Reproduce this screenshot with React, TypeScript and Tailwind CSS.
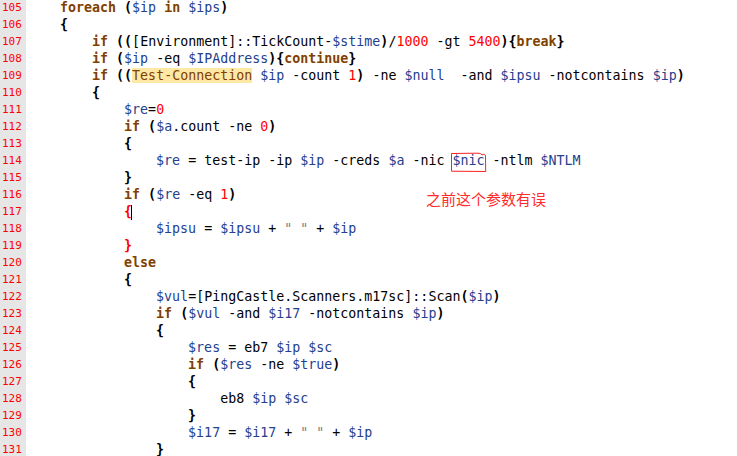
import React from 'react';

const code: string[] = [
  '    foreach ($ip in $ips)',
  '    {',
  '        if (([Environment]::TickCount-$stime)/1000 -gt 5400){break}',
  '        if ($ip -eq $IPAddress){continue}',
  '        if ((Test-Connection $ip -count 1) -ne $null  -and $ipsu -notcontains $ip)',
  '        {',
  '            $re=0',
  '            if ($a.count -ne 0)',
  '            {',
  '                $re = test-ip -ip $ip -creds $a -nic $nic -ntlm $NTLM',
  '            }',
  '            if ($re -eq 1)',
  '            {',
  '                $ipsu = $ipsu + " " + $ip',
  '            }',
  '            else',
  '            {',
  '                $vul=[PingCastle.Scanners.m17sc]::Scan($ip)',
  '                if ($vul -and $i17 -notcontains $ip)',
  '                {',
  '                    $res = eb7 $ip $sc',
  '                    if ($res -ne $true)',
  '                    {',
  '                        eb8 $ip $sc',
  '                    }',
  '                    $i17 = $i17 + " " + $ip',
  '                }',
];

const keywords = ['foreach', 'in', 'if', 'else', 'continue', 'break'];

type Kind = 'var' | 'str' | 'op' | 'num' | 'kw' | 'cmd' | 'brace' | 'text';

const styles: Record<Kind, string> = {
  var: 'text-[#24408e]',
  str: 'text-[#808080]',
  op: 'text-black',
  num: 'text-[#ff0000]',
  kw: 'text-[#804000] font-bold',
  cmd: 'text-[#804000] bg-[#fde8a4]',
  brace: 'text-black font-bold',
  text: 'text-black',
};

const tokenRe = /(\$\w+)|("[^"]*")|(-[A-Za-z]+)|(\d+)|([A-Za-z_]\w*(?:-[A-Za-z]\w*)*)|([(){}])|(\s+)|(.)/g;

function tokenize(line: string): { t: string; k: Kind }[] {
  const out: { t: string; k: Kind }[] = [];
  for (const m of line.matchAll(tokenRe)) {
    let k: Kind = 'text';
    if (m[1]) k = 'var';
    else if (m[2]) k = 'str';
    else if (m[3]) k = 'op';
    else if (m[4]) k = 'num';
    else if (m[5]) k = keywords.includes(m[5]) ? 'kw' : m[5] === 'Test-Connection' ? 'cmd' : 'text';
    else if (m[6]) k = 'brace';
    out.push({ t: m[0], k });
  }
  return out;
}

const CodeLine = ({ text, index }: { text: string; index: number }) => {
  let nicCount = 0;
  return (
    <div className="flex h-[17px]">
      <div className="w-[26px] shrink-0 bg-[#e6e6e6] pl-[2px] text-[11px] leading-[17px] text-[#ff0000]">
        {105 + index}
      </div>
      <div className="pl-[2px] whitespace-pre">
        {tokenize(text).map((tok, i) => {
          // matched brace pair at 117 / 119
          if (tok.k === 'brace' && (index === 12 || index === 14)) {
            return (
              <span key={i} className="font-bold text-[#ff0000]">
                {tok.t}
                {index === 12 && <span className="inline-block w-px h-[15px] bg-black align-middle -ml-px" />}
              </span>
            );
          }
          if (index === 9 && tok.t === '$nic' && ++nicCount === 1) {
            return (
              <span key={i} className={`relative ${styles[tok.k]}`}>
                {tok.t}
                <svg className="absolute left-[-2px] top-[-1px]" width="40" height="21" viewBox="0 0 40 21" fill="none">
                  <path
                    d="M1.5 1.5 L27 1.2 Q31 0.8 32 3 Q34 1 35.5 3.5 L35.7 19.5 L1.5 19.2 Z"
                    stroke="#ff2020"
                    strokeWidth="1"
                  />
                </svg>
              </span>
            );
          }
          return (
            <span key={i} className={styles[tok.k]}>
              {tok.t}
            </span>
          );
        })}
      </div>
    </div>
  );
};

export default function App() {
  return (
    <div className="relative w-[737px] h-[456px] overflow-hidden bg-white font-['DejaVu_Sans_Mono',monospace] text-[13.3px] leading-[17px]">
      <div className="-mt-[1px] bg-[#e6e6e6] w-[26px] h-px" />
      <div className="-mt-px">
        {code.map((line, i) => (
          <CodeLine key={i} text={line} index={i} />
        ))}
      </div>
      <div className="absolute left-[426px] top-[189px] text-[15px] leading-[20px] text-[#ff2a2a] font-['Noto_Sans_CJK_SC',sans-serif]">
        之前这个参数有误
      </div>
    </div>
  );
}
